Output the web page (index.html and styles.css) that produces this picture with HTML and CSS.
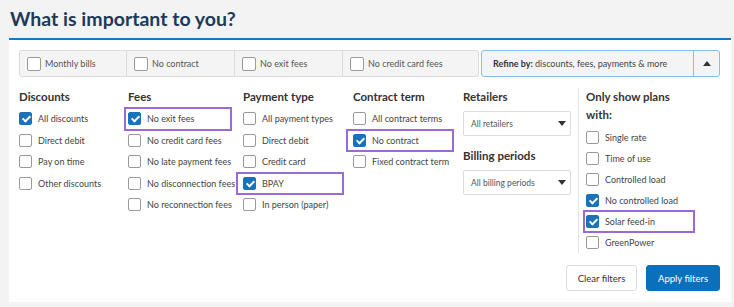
FILE: index.html
```html
<!DOCTYPE html>
<html lang="en">
  <head>
    <meta charset="UTF-8" />
    <title>What is important to you?</title>
    <link rel="stylesheet" href="styles.css">
  </head>
  <body>
    <h1 class="title">What is important to you?</h1>

    <div class="panel">
      <div class="quick-bar">
        <label class="quick-item"><span class="box"></span>Monthly bills</label>
        <label class="quick-item"><span class="box"></span>No contract</label>
        <label class="quick-item"><span class="box"></span>No exit fees</label>
        <label class="quick-item wide"><span class="box"></span>No credit card fees</label>
        <div class="refine">
          <span class="refine-text"><b>Refine by:</b> discounts, fees, payments &amp; more</span>
          <span class="refine-toggle"><span class="tri-up"></span></span>
        </div>
      </div>

      <div class="filters">
        <div class="col">
          <h3 class="col-title">Discounts</h3>
          <label class="row"><span class="box checked"></span>All discounts</label>
          <label class="row"><span class="box"></span>Direct debit</label>
          <label class="row"><span class="box"></span>Pay on time</label>
          <label class="row"><span class="box"></span>Other discounts</label>
        </div>

        <div class="col">
          <h3 class="col-title">Fees</h3>
          <label class="row marked mark-fees"><span class="box checked"></span>No exit fees</label>
          <label class="row"><span class="box"></span>No credit card fees</label>
          <label class="row"><span class="box"></span>No late payment fees</label>
          <label class="row"><span class="box"></span>No disconnection fees</label>
          <label class="row"><span class="box"></span>No reconnection fees</label>
        </div>

        <div class="col">
          <h3 class="col-title">Payment type</h3>
          <label class="row"><span class="box"></span>All payment types</label>
          <label class="row"><span class="box"></span>Direct debit</label>
          <label class="row"><span class="box"></span>Credit card</label>
          <label class="row marked mark-pay"><span class="box checked"></span>BPAY</label>
          <label class="row"><span class="box"></span>In person (paper)</label>
        </div>

        <div class="col">
          <h3 class="col-title">Contract term</h3>
          <label class="row"><span class="box"></span>All contract terms</label>
          <label class="row marked mark-term"><span class="box checked"></span>No contract</label>
          <label class="row"><span class="box"></span>Fixed contract term</label>
        </div>

        <div class="col">
          <h3 class="col-title">Retailers</h3>
          <div class="select">All retailers<span class="tri-down"></span></div>
          <h3 class="col-title spaced">Billing periods</h3>
          <div class="select">All billing periods<span class="tri-down"></span></div>
        </div>

        <div class="col side">
          <h3 class="col-title">Only show plans<br />with:</h3>
          <label class="row tight"><span class="box"></span>Single rate</label>
          <label class="row tight"><span class="box"></span>Time of use</label>
          <label class="row tight"><span class="box"></span>Controlled load</label>
          <label class="row tight"><span class="box checked"></span>No controlled load</label>
          <label class="row tight marked mark-solar"><span class="box checked"></span>Solar feed-in</label>
          <label class="row tight"><span class="box"></span>GreenPower</label>
        </div>
      </div>

      <div class="actions">
        <button class="btn btn-clear">Clear filters</button>
        <button class="btn btn-apply">Apply filters</button>
      </div>
    </div>
  </body>
</html>
```

FILE: styles.css
```css
* {
  margin: 0;
  padding: 0;
  box-sizing: border-box;
}

body {
  font-family: Lato, "Open Sans", Arial, sans-serif;
  background: #f3f3f3;
  color: #444;
  width: 734px;
  height: 307px;
  overflow: hidden;
}

.title {
  font-size: 19.5px;
  font-weight: 700;
  color: #1d3a58;
  line-height: 24px;
  padding: 7px 0 0 10px;
  height: 38px;
}

.panel {
  margin-left: 9px;
  width: 722px;
  height: 264px;
  background: #fff;
  border-top: 2px solid #1b75bc;
  padding: 10px 11px 0 10px;
}

/* quick filter bar */

.quick-bar {
  display: flex;
  height: 27px;
}

.quick-item {
  display: flex;
  align-items: center;
  width: 108px;
  background: #f4f4f4;
  border: 1px solid #dcdcdc;
  border-left: none;
  padding-left: 7px;
  font-size: 9px;
  color: #555;
}

.quick-item:first-child {
  border-left: 1px solid #dcdcdc;
  border-radius: 3px 0 0 3px;
}

.quick-item .box {
  width: 14px;
  height: 14px;
  margin-right: 4px;
}

.quick-item.wide {
  width: 136px;
  border-radius: 0 3px 3px 0;
}

.refine {
  display: flex;
  margin-left: 2px;
  flex: 1;
  background: #f4f4f4;
  border: 1px solid #8cbde6;
  border-radius: 3px;
}

.refine-text {
  flex: 1;
  display: flex;
  align-items: center;
  padding-left: 11px;
  font-size: 9px;
  color: #444;
  white-space: pre;
}

.refine-text b {
  color: #333;
}

.refine-toggle {
  width: 26px;
  border-left: 1px solid #8cbde6;
  display: flex;
  align-items: center;
  justify-content: center;
}

.tri-up {
  width: 0;
  height: 0;
  border-left: 4px solid transparent;
  border-right: 4px solid transparent;
  border-bottom: 5px solid #333;
}

.tri-down {
  width: 0;
  height: 0;
  border-left: 4px solid transparent;
  border-right: 4px solid transparent;
  border-top: 5px solid #333;
}

/* filter columns */

.filters {
  display: grid;
  grid-template-columns: 109px 115px 110px 110px 115px 1fr;
  margin-top: 11px;
  height: 165px;
}

.col-title {
  font-size: 11.5px;
  font-weight: 700;
  color: #333;
  line-height: 18px;
  margin-bottom: 2px;
}

.col-title.spaced {
  margin-top: 11px;
}

.row {
  position: relative;
  display: flex;
  align-items: center;
  height: 21.5px;
  font-size: 9px;
  color: #444;
  white-space: nowrap;
}

.row.tight {
  height: 21px;
}

.box {
  flex: none;
  display: inline-block;
  position: relative;
  width: 13px;
  height: 13px;
  border: 1.5px solid #9a9a9a;
  border-radius: 2px;
  background: #fff;
  margin-right: 6px;
}

.box.checked {
  background: #1a72bb;
  border-color: #1a72bb;
}

.box.checked::after {
  content: "";
  position: absolute;
  left: 3.5px;
  top: 1px;
  width: 3px;
  height: 6px;
  border-right: 2px solid #fff;
  border-bottom: 2px solid #fff;
  transform: rotate(45deg);
}

/* hand-drawn highlight around a chosen option */

.marked::after {
  content: "";
  position: absolute;
  top: -1px;
  bottom: -1px;
  left: -5px;
  width: 105px;
  border: 2px solid #9b6ad8;
}

.mark-fees::after {
  left: -4px;
  width: 104px;
}

.mark-pay::after {
  left: -7px;
  width: 104px;
}

.mark-term::after {
  left: -7px;
  width: 104px;
}

.mark-solar::after {
  left: -3px;
  width: 108px;
}

.select {
  display: flex;
  align-items: center;
  justify-content: space-between;
  width: 108px;
  height: 25px;
  margin-top: 5px;
  padding: 0 4px 0 7px;
  border: 1px solid #dcdcdc;
  border-radius: 2px;
  font-size: 8.5px;
  color: #555;
}

.side {
  border-left: 1px solid #e3e3e3;
  padding-left: 7px;
}

.side .col-title {
  margin-bottom: 3px;
}

/* buttons */

.actions {
  display: flex;
  justify-content: flex-end;
  gap: 9px;
  margin-top: 12px;
}

.btn {
  font-family: inherit;
  font-size: 9.5px;
  height: 26px;
  border-radius: 3px;
  cursor: pointer;
}

.btn-clear {
  width: 71px;
  background: #fff;
  border: 1px solid #dcdcdc;
  color: #333;
}

.btn-apply {
  width: 74px;
  background: #0b70bc;
  border: 1px solid #0b70bc;
  color: #fff;
}
```
